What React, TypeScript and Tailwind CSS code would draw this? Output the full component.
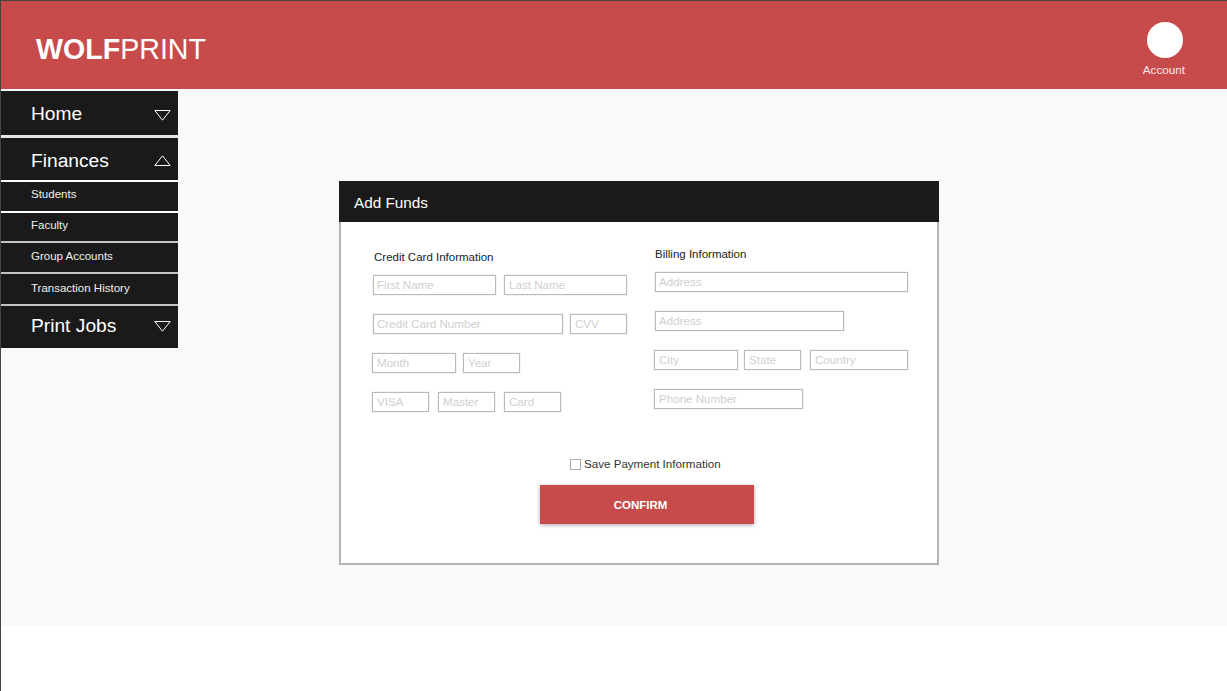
const inputClass =
  "h-[20px] border border-[#b9b9b9] bg-white pb-[2px] text-[11.6px] text-[#333] shadow-[0_0_1px_#c4c4c4] outline-0 placeholder:text-[#cfcfcf]";

const Field = ({ label, width, left = 0, pad = "px-[4px]" }: { label: string; width: number; left?: number; pad?: string }) => (
  <input
    placeholder={label}
    className={`${inputClass} ${pad}`}
    style={{ width: `${width}px`, marginLeft: `${left}px` }}
  />
);

const Triangle = ({ up = false, offset = "" }: { up?: boolean; offset?: string }) => (
  <svg width="17" height="11" viewBox="0 0 17 11" fill="none" className={`shrink-0 ${offset}`}>
    {up ? (
      <path d="M0.8 10.5 L8.5 0.8 L16.2 10.5 Z" stroke="#fff" strokeWidth="1" />
    ) : (
      <path d="M0.8 0.5 L8.5 10.2 L16.2 0.5 Z" stroke="#fff" strokeWidth="1" />
    )}
  </svg>
);

const MainItem = ({ label, up, height, offset, textOffset = "" }: { label: string; up?: boolean; height: string; offset?: string; textOffset?: string }) => (
  <div className={`flex items-center justify-between bg-[#1a1a1a] pl-[30px] pr-[7px] ${height}`}>
    <span className={`text-[19.2px] leading-none text-white ${textOffset}`}>{label}</span>
    <Triangle up={up} offset={offset} />
  </div>
);

const SubItem = ({ label, height, line }: { label: string; height: string; line: string }) => (
  <div className={`bg-[#1a1a1a] pl-[30px] text-[11.5px] leading-[13px] text-[#f0f0f0] ${height} ${line}`}>
    {label}
  </div>
);

const Sidebar = () => (
  <aside className="flex w-[177px] shrink-0 flex-col pt-[2px]">
    <MainItem label="Home" height="h-[44px]" offset="mt-[4px]" textOffset="mt-[2px]" />
    <div className="h-[3px] bg-[#e6e6e6]" />
    <MainItem label="Finances" up height="h-[42px] pt-[2px]" textOffset="mt-[1px]" />
    <div className="h-[2px] bg-white" />
    <SubItem label="Students" height="h-[31px] pt-[6px]" line="border-b-2 border-white" />
    <SubItem label="Faculty" height="h-[30px] pt-[6px]" line="border-b-2 border-[#c4c4c4]" />
    <SubItem label="Group Accounts" height="h-[31px] pt-[7px]" line="border-b-2 border-[#c4c4c4]" />
    <SubItem label="Transaction History" height="h-[32px] pt-[8px]" line="border-b-2 border-[#c4c4c4]" />
    <MainItem label="Print Jobs" height="h-[42px] pb-[2px]" />
  </aside>
);

const AddFunds = () => (
  <section className="ml-[161px] mt-[92px] h-[384px] w-[600px] bg-white">
    <div className="flex h-[41px] items-center bg-[#1a1a1a] pl-[15px] pt-[4px] text-[15.3px] text-white">Add Funds</div>
    <div className="flex h-[343px] flex-col border-x-2 border-b-2 border-[#b5b5b5]">
      <div className="flex">
        <div className="ml-[31px] w-[281px] pt-[28px]">
          <div className="ml-[2px] text-[11.5px] leading-[14px] text-[#222]">Credit Card Information</div>
          <div className="ml-[1px] mt-[11px] flex">
            <Field label="First Name" width={123} pad="px-[3px]" />
            <Field label="Last Name" width={123} left={8} />
          </div>
          <div className="ml-[1px] mt-[19px] flex">
            <Field label="Credit Card Number" width={190} pad="px-[3px]" />
            <Field label="CVV" width={57} left={7} />
          </div>
          <div className="mt-[19px] flex">
            <Field label="Month" width={84} />
            <Field label="Year" width={57} left={7} />
          </div>
          <div className="mt-[19px] flex">
            <Field label="VISA" width={57} />
            <Field label="Master" width={57} left={9} />
            <Field label="Card" width={57} left={9} />
          </div>
        </div>
        <div className="pl-[1px] pt-[25px]">
          <div className="ml-[1px] text-[11.5px] leading-[14px] text-[#222]">Billing Information</div>
          <div className="ml-[1px] mt-[11px] flex">
            <Field label="Address" width={253} pad="px-[3px]" />
          </div>
          <div className="ml-[1px] mt-[19px] flex">
            <Field label="Address" width={189} pad="px-[3px]" />
          </div>
          <div className="mt-[19px] flex">
            <Field label="City" width={84} />
            <Field label="State" width={57} left={6} />
            <Field label="Country" width={98} left={9} />
          </div>
          <div className="mt-[19px] flex">
            <Field label="Phone Number" width={149} />
          </div>
        </div>
      </div>
      <label className="ml-[229px] mt-[45px] flex items-center text-[11.6px] leading-[14px] text-[#333]">
        <span className="h-[11px] w-[11px] border border-[#aaa] bg-white" />
        <span className="ml-[3px]">Save Payment Information</span>
      </label>
      <button className="ml-[199px] mt-[14px] flex h-[39px] w-[214px] items-center justify-center bg-[#c84b4b] pr-[13px] pt-[3px] text-[11.5px] font-bold text-white shadow-[0_1px_4px_rgba(0,0,0,0.35)]">
        CONFIRM
      </button>
    </div>
  </section>
);

const App = () => (
  <div className="h-[691px] w-full overflow-hidden border-l border-t border-[#444] bg-white font-['Liberation_Sans',Arial,sans-serif]">
    <header className="flex h-[88px] items-center justify-between bg-[#c84b4b] pl-[35px] pr-[42px]">
      <h1 className="pt-[8px] text-[28.6px] leading-none text-white">
        <b>WOLF</b>PRINT
      </h1>
      <div className="flex flex-col items-center pt-[8px]">
        <div className="ml-[2px] h-[36px] w-[36px] rounded-full bg-white" />
        <span className="mt-[5px] text-[11.7px] leading-[14px] text-[#fbe9e9]">Account</span>
      </div>
    </header>
    <main className="flex h-[537px] bg-[#f9f9f9]">
      <Sidebar />
      <AddFunds />
    </main>
  </div>
);

export default App;
